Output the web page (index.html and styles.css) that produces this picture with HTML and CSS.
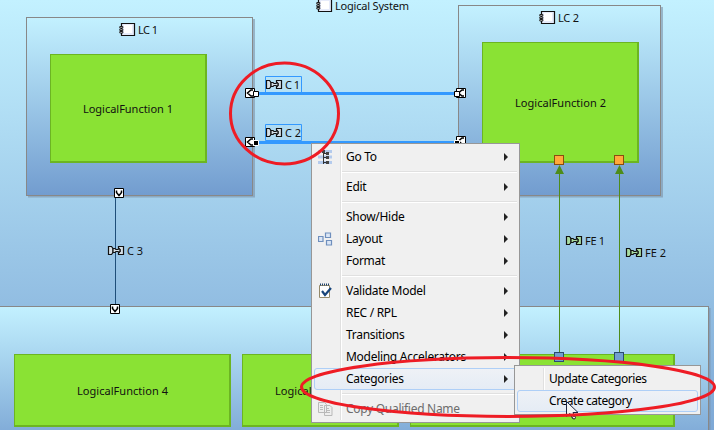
FILE: index.html
```html
<!DOCTYPE html>
<html lang="en">
<head>
<meta charset="utf-8">
<title>Logical System</title>
<link rel="stylesheet" href="styles.css">
</head>
<body>
<main class="canvas">
<svg class="diagram" width="714" height="430" viewBox="0 0 714 430">
  <defs>
    <linearGradient id="lc" x1="0" y1="0" x2="0" y2="1"><stop offset="0" stop-color="#c3f1ff"/><stop offset="1" stop-color="#729ccf"/></linearGradient>
    <linearGradient id="lower" gradientUnits="userSpaceOnUse" x1="0" y1="306" x2="0" y2="461"><stop offset="0" stop-color="#c3f1ff"/><stop offset="1" stop-color="#729ccf"/></linearGradient>
    <g id="component">
      <path d="M2.500 .5h13v12h-13z" fill="#e6ebfa" stroke="#111" stroke-width="1.200"/>
      <path d="M5 2h8v8H5z" fill="#fff"/>
      <path d="M.8 3.500h3v1.500h-3zM.8 6h3v1.500h-3zM.8 8.500h3v1.500h-3z" fill="#fff" stroke="#111" stroke-width=".9"/>
    </g>
    <g id="exchange">
      <path d="M.5.5h3l1.500 2v4l-1.500 2h-3zM10.500.5h5v8h-5v-2l1.500-1v-2l-1.500-1z" stroke="#111" stroke-width="1.200"/>
      <path d="M5 2.500h2l1 1h2l1-1 1 1v2l-1 1-1-1H8l-1 1H5z" class="core" stroke="#111" stroke-width="1.200"/>
    </g>
    <g id="port-down"><path d="M.5.5h9v9h-9z" fill="#fff" stroke="#000"/><path d="M2.500 2.500v2l2.500 3 2.500-3v-2" fill="none" stroke="#000" stroke-width="1.500"/></g>
    <g id="port-left"><path d="M.5.5h9v9h-9z" fill="#fff" stroke="#000"/><path d="M8 2H6L2.500 5 6 8h2" fill="none" stroke="#000" stroke-width="1.500"/></g>
  </defs>

  <path class="shadow" d="M28 196.500h226V19M460 196.500h202V7M709.500 308v122"/>
  <rect class="block" x="26.500" y="17.500" width="226" height="178"/>
  <rect class="block" x="458.500" y="5.500" width="202" height="190"/>
  <rect class="block lower" x="-5" y="306.500" width="713.500" height="150"/>

  <g class="function">
    <path class="edge" d="M50 54h157v109H50zM482 42h157v121H482zM14 354h217v73H14zM242 354h157v73H242zM410 354h265v73H410z"/>
    <path class="face" d="M51 55h154v106H51zM483 43h154v118H483zM15 355h214v70H15zM243 355h154v70H243zM411 355h262v70H411z"/>
  </g>

  <use href="#component" x="316" y="-1"/><use href="#component" x="119" y="23"/><use href="#component" x="539" y="11"/>
  <g class="labels">
    <text x="335" y="10" textLength="74">Logical System</text>
    <text x="138" y="34" textLength="20">LC 1</text>
    <text x="558" y="22" textLength="21">LC 2</text>
    <text x="83" y="113" textLength="90">LogicalFunction 1</text>
    <text x="515" y="107" textLength="91">LogicalFunction 2</text>
    <text x="77" y="395" textLength="91">LogicalFunction 4</text>
    <text x="275" y="395" textLength="91">LogicalFunction 5</text>
  </g>

  <path d="M115.500 197v108" stroke="#1f4e79"/>
  <use href="#port-down" x="114" y="188"/><use href="#port-down" x="110" y="304"/>
  <use href="#exchange" class="grey" x="108" y="246"/>

  <path d="M559.500 172v182M619.500 172v182" stroke="#4e8c1a"/>
  <path d="M559.500 165l4.500 9h-9zM619.500 165l4.500 9h-9z" fill="#4e8c1a"/>
  <g class="pin out"><rect x="554.500" y="155.500" width="9" height="9"/><rect x="614.500" y="155.500" width="9" height="9"/></g>
  <g class="pin in"><rect x="554.500" y="352.500" width="9" height="9"/><rect x="614.500" y="352.500" width="9" height="9"/></g>
  <use href="#exchange" class="green" x="566" y="236"/><use href="#exchange" class="green" x="626" y="248"/>

  <use href="#port-left" x="245" y="88"/><use href="#port-left" x="245" y="137"/>
  <use href="#port-left" x="456" y="88"/><use href="#port-left" x="456" y="136"/>
  <path d="M255 93.500h200M255 142.500h200" stroke="#3399ff" stroke-width="3"/>
  <path d="M265.500 76.500h36v16h-36zM265.500 124.500h36v16h-36z" fill="none" stroke="#3399ff"/>
  <use href="#exchange" class="grey" x="266" y="80"/><use href="#exchange" class="grey" x="266" y="128"/>
  <path d="M253.500 91.500h5v5h-5zM454.500 91.500h5v5h-5z" fill="#fff" stroke="#000"/>
  <path d="M253.500 140.500h5v5h-5zM454.500 140.500h5v5h-5z" fill="#000" stroke="#fff"/>
  <g class="labels">
    <text x="285" y="89" textLength="15">C 1</text>
    <text x="285" y="137" textLength="16">C 2</text>
    <text x="127" y="255" textLength="16">C 3</text>
    <text x="585" y="245" textLength="20">FE 1</text>
    <text x="645" y="257" textLength="21">FE 2</text>
  </g>
</svg>

<div class="menu main-menu">
  <div class="item more"><svg class="icon" width="16" height="16"><path d="M0 2.500h14M0 8h14M0 13.500h14" stroke="#b4cbed" stroke-width="3"/><path d="M5.500 1v14M5 4.500h4M5 8.500h4M5 13.500h4" stroke="#333" fill="none"/><path d="M4 1h3v3H4zM8 3h3v3H8zM8 7h3v3H8zM8 12h3v3H8z" fill="#444"/></svg><span>Go To</span></div>
  <hr>
  <div class="item more"><span>Edit</span></div>
  <hr>
  <div class="item more"><span>Show/Hide</span></div>
  <div class="item more"><svg class="icon" width="16" height="16"><path d="M.5 5.500h4.500v5H.5zM7.500 2h5v4.500h-5zM8.500 9.500h5v4.500h-5z" fill="#dbe6f5" stroke="#6f8fbd" stroke-width="1.200"/></svg><span>Layout</span></div>
  <div class="item more"><span>Format</span></div>
  <hr>
  <div class="item more"><svg class="icon" width="16" height="16"><path d="M1.500 2.500h10v12h-10z" fill="#fff" stroke="#948969"/><path d="M2 1.500h10" stroke="#1d426e" stroke-width="2" stroke-dasharray="1 1"/><path d="M4 8l3 4 6-7" fill="none" stroke="#18457b" stroke-width="2.200"/></svg><span>Validate Model</span></div>
  <div class="item more"><span>REC / RPL</span></div>
  <div class="item more"><span>Transitions</span></div>
  <div class="item more"><span>Modeling Accelerators</span></div>
  <div class="item more hot"><span>Categories</span></div>
  <hr>
  <div class="item disabled"><svg class="icon" width="16" height="16"><path d="M.5 1.500h6l2 2v8h-8zM6.500 4.500h5.500l2 2v8H6.500z" fill="#eee" stroke="#b9b9b9"/><path d="M2 4.500h3M2 6.500h3M2 8.500h3M8 7.500h3M8 9.500h4M8 11.500h4" stroke="#bbb"/></svg><span>Copy Qualified Name</span></div>
</div>

<div class="menu sub-menu">
  <div class="item"><span>Update Categories</span></div>
  <div class="item hot"><span>Create category</span></div>
</div>

<svg class="marks" width="721" height="437">
  <path d="M566.500 401.500v15l3.500-3 2.500 5 2.500-1-2-5h5z" fill="#f4f4f4" stroke="#1b2540"/>
  <circle cx="574" cy="417.500" r="1.500" fill="#eee" stroke="#222"/>
  <g fill="none" stroke="#ee1c25" stroke-width="3"><ellipse cx="284.500" cy="113.500" rx="54" ry="50.500"/><ellipse cx="508" cy="387" rx="206.500" ry="29.500"/></g>
</svg>
</main>
</body>
</html>
```
FILE: styles.css
```css
body { margin: 0; background: #fff; overflow: hidden; }
.canvas {
  position: relative;
  width: 714px;
  height: 430px;
  background: linear-gradient(#c3f1ff, #729ccf 500px);
  font-family: "Noto Sans", sans-serif;
}
.diagram { display: block; }
.shadow { fill: none; stroke: #7c90a5; stroke-opacity: .6; stroke-width: 2; }
.block { fill: url(#lc); stroke: #888; }
.lower { fill: url(#lower); }
.edge { fill: #6cb522; }
.face { fill: #8ae234; }
.labels { font-size: 11px; fill: #111; }
.grey { fill: #d5dfe6; }
.green { fill: #a9dca0; }
.pin.out { fill: #ffa93b; stroke: #8a4d10; }
.pin.in { fill: #729fcf; stroke: #2c4a72; }

.menu {
  position: absolute;
  box-sizing: border-box;
  padding: 2px;
  border: 1px solid #979797;
  background: linear-gradient(90deg, #e0e0e0 1px, #fff 1px) 28px 2px / 2px calc(100% - 4px) no-repeat #f0f0f0;
}
.main-menu { left: 311px; top: 143px; width: 209px; letter-spacing: -.29px; }
.sub-menu { left: 514px; top: 365px; width: 187px; letter-spacing: -.44px; }
.item {
  display: flex;
  align-items: center;
  box-sizing: border-box;
  height: 22px;
  padding-right: 8px;
  border: 1px solid transparent;
  border-radius: 3px;
  font-size: 12px;
  line-height: 20px;
  white-space: nowrap;
  color: #000;
}
.item::before { content: ""; width: 31px; }
.item:has(.icon)::before { width: 3px; }
.icon { margin-right: 12px; }
.more::after {
  content: "";
  margin-left: auto;
  border: 4px solid transparent;
  border-left-color: #222;
  border-right-width: 0;
}
.hot { border-color: #aecff7; background: linear-gradient(#eef1f6, #e5ecf5); }
.disabled { color: #6d6d6d; }
.menu hr {
  height: 1px;
  margin: 3px 0 3px 28px;
  border: 0;
  border-top: 1px solid #e0e0e0;
  background: #fff;
}
.marks { position: absolute; left: 0; top: 0; }
```
